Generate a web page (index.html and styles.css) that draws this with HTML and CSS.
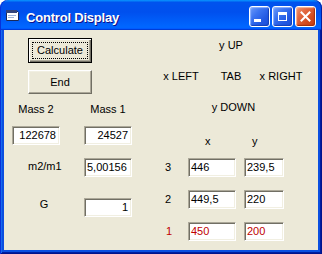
FILE: index.html
```html
<!DOCTYPE html>
<html>
<head>
<meta charset="utf-8">
<link rel="stylesheet" href="styles.css">
</head>
<body>
<div class="window">
  <div class="titlebar">
    <svg class="app-icon" width="15" height="13" viewBox="0 0 15 13">
      <path d="M1.5 1.5h10l2 2v8h-12z" fill="#fff" stroke="#1a2a5a" stroke-width="1"/>
      <rect x="1" y="1" width="11" height="3" fill="#34457a"/>
      <rect x="3" y="6" width="8" height="1" fill="#9fb3d8"/>
      <rect x="3" y="8" width="6" height="1" fill="#9fb3d8"/>
    </svg>
    <span class="title">Control Display</span>
    <div class="caption-btns">
      <div class="cb min"><span class="min-bar"></span></div>
      <div class="cb max"><span class="max-box"></span></div>
      <div class="cb close">
        <svg width="13" height="13" viewBox="0 0 13 13"><path d="M2.5 2.5l8 8M10.5 2.5l-8 8" stroke="#fff" stroke-width="2" stroke-linecap="square"/></svg>
      </div>
    </div>
  </div>
  <div class="frame">
    <div class="client">
      <div class="left">
        <button class="btn default"><span class="focus">Calculate</span></button>
        <button class="btn end">End</button>
        <div class="mass-row labels">
          <div class="lbl">Mass 2</div>
          <div class="lbl">Mass 1</div>
        </div>
        <div class="mass-row boxes">
          <div class="tb r">122678</div>
          <div class="tb r">24527</div>
        </div>
        <div class="mass-row ratio">
          <div class="lbl side">m2/m1</div>
          <div class="tb">5,00156</div>
        </div>
        <div class="mass-row grav">
          <div class="lbl side g">G</div>
          <div class="tb r">1</div>
        </div>
      </div>
      <div class="right">
        <div class="keys">
          <div class="k up">y UP</div>
          <div class="k left-k">x LEFT</div>
          <div class="k tab">TAB</div>
          <div class="k right-k">x RIGHT</div>
          <div class="k down">y DOWN</div>
        </div>
        <div class="coords">
          <div></div>
          <div class="hx">x</div>
          <div class="hy">y</div>
          <div class="rl">3</div>
          <div class="tb c1">446</div>
          <div class="tb c2">239,5</div>
          <div class="rl">2</div>
          <div class="tb c1">449,5</div>
          <div class="tb c2">220</div>
          <div class="rl red">1</div>
          <div class="tb c1 red">450</div>
          <div class="tb c2 red">200</div>
        </div>
      </div>
    </div>
  </div>
</div>
</body>
</html>
```
FILE: styles.css
```css
html, body {
  margin: 0;
  padding: 0;
  background: #ffffff;
}
.window {
  width: 322px;
  height: 254px;
  display: flex;
  flex-direction: column;
  font-family: "Liberation Sans", Arial, sans-serif;
  font-size: 11px;
  line-height: 13px;
  color: #000;
}
.titlebar {
  height: 30px;
  flex: none;
  display: flex;
  align-items: center;
  border-radius: 8px 8px 0 0;
  background: linear-gradient(180deg, #0997ff, #0053ee 8%, #0050ee 40%, #0066ff 88%, #0066ff 93%, #005bff 95%, #003dd7 96%, #003dd7);
  box-shadow: inset 1px 0 #0831d9, inset -1px 0 #001ea0;
}
.app-icon {
  margin-left: 5px;
  margin-top: 0;
  flex: none;
}
.title {
  margin-left: 6px;
  margin-top: 4px;
  font-family: "Liberation Sans", Arial, sans-serif;
  font-weight: bold;
  font-size: 13px;
  color: #fff;
  text-shadow: 1px 1px #0f1089;
  letter-spacing: -0.2px;
}
.caption-btns {
  margin-left: auto;
  margin-right: 6px;
  display: flex;
  gap: 2px;
  margin-top: 2px;
}
.cb {
  width: 21px;
  height: 21px;
  box-sizing: border-box;
  border: 1px solid #fff;
  border-radius: 3px;
  position: relative;
  display: flex;
  align-items: center;
  justify-content: center;
}
.cb.min, .cb.max {
  background: linear-gradient(135deg, #6f9cf9 0%, #3c74f1 35%, #2258e2 70%, #1b4fd8 100%);
  box-shadow: inset -1px -1px 1px #1540b8, inset 1px 1px 1px #8fb3ff;
}
.cb.close {
  background: linear-gradient(135deg, #f0966e 0%, #e2673f 35%, #d24a1e 70%, #c53d12 100%);
  box-shadow: inset -1px -1px 1px #a3300c, inset 1px 1px 1px #f7b89c;
}
.min-bar {
  position: absolute;
  left: 4px;
  bottom: 4px;
  width: 7px;
  height: 3px;
  background: #fff;
}
.max-box {
  width: 9px;
  height: 9px;
  box-sizing: border-box;
  border: 1px solid #fff;
  border-top-width: 3px;
}
.frame {
  flex: 1;
  background: #0b4fe0;
  padding: 0 4px 4px;
  box-shadow: inset 1px 0 #0831d9, inset -1px 0 #00138c, inset 0 -1px #00138c, inset 2px 0 #166aee, inset -2px 0 #001ea0, inset 0 -2px #001ea0;
  display: flex;
}
.client {
  flex: 1;
  background: #ece9d8;
  display: flex;
}
.left {
  width: 144px;
  padding-left: 8px;
  display: flex;
  flex-direction: column;
  align-items: flex-start;
}
.btn {
  font-family: "Liberation Sans", Arial, sans-serif;
  font-size: 11px;
  line-height: 13px;
  color: #000;
  width: 64px;
  height: 25px;
  margin-left: 16px;
  padding: 0;
  box-sizing: border-box;
  background: #ece9d8;
  border: 1px solid;
  border-color: #fff #716f64 #716f64 #fff;
  box-shadow: inset -1px -1px #aca899, inset 1px 1px #f1efe2;
  display: flex;
  align-items: center;
  justify-content: center;
}
.btn.default {
  margin-top: 8px;
  border-color: #000;
  box-shadow: inset 1px 1px #fff, inset -1px -1px #716f64, inset -2px -2px #aca899;
}
.focus {
  display: flex;
  align-items: center;
  justify-content: center;
  width: 56px;
  height: 17px;
  box-sizing: border-box;
  border: 1px dotted #000;
  margin-top: -1px;
}
.btn.end {
  margin-top: 7px;
  height: 24px;
}
.mass-row {
  display: grid;
  grid-template-columns: 48px 48px;
  column-gap: 24px;
}
.labels { margin-top: 9px; }
.boxes { margin-top: 10px; }
.ratio { margin-top: 13px; }
.grav { margin-top: 21px; }
.lbl {
  text-align: center;
  white-space: nowrap;
}
.lbl.side {
  padding-left: 16px;
  align-self: start;
  margin-top: 2px;
}
.lbl.side.g { margin-top: 0; }
.tb {
  height: 19px;
  box-sizing: border-box;
  background: #fff;
  border: 1px solid;
  border-color: #aca899 #fff #fff #aca899;
  box-shadow: inset 1px 1px #716f64, inset -1px -1px #f1efe2;
  padding: 1px 3px 0 2px;
  line-height: 15px;
  white-space: nowrap;
  overflow: hidden;
}
.tb.r { text-align: right; }
.right {
  flex: 1;
  display: flex;
  flex-direction: column;
}
.keys {
  margin-top: 9px;
  margin-left: 0;
  display: grid;
  grid-template-columns: 50px 50px 50px;
  grid-auto-rows: 13px;
  row-gap: 18px;
}
.k { text-align: center; white-space: nowrap; }
.k.up { grid-column: 2; grid-row: 1; }
.k.left-k { grid-column: 1; grid-row: 2; }
.k.tab { grid-column: 2; grid-row: 2; }
.k.right-k { grid-column: 3; grid-row: 2; }
.k.down { grid-column: 2; grid-row: 3; padding-left: 5px; }
.coords {
  margin-top: 21px;
  margin-left: 9px;
  display: grid;
  grid-template-columns: 23px 56px 40px;
  grid-template-rows: 10px 19px 19px 19px;
  row-gap: 13px;
  align-items: center;
}
.hx { padding-left: 17px; align-self: start; }
.hy { padding-left: 8px; align-self: start; }
.rl { align-self: start; margin-top: 3px; }
.rl.red { padding-left: 1px; }
.tb.c1 { width: 48px; }
.tb.c2 { width: 40px; }
.red { color: #c00000; }
```
